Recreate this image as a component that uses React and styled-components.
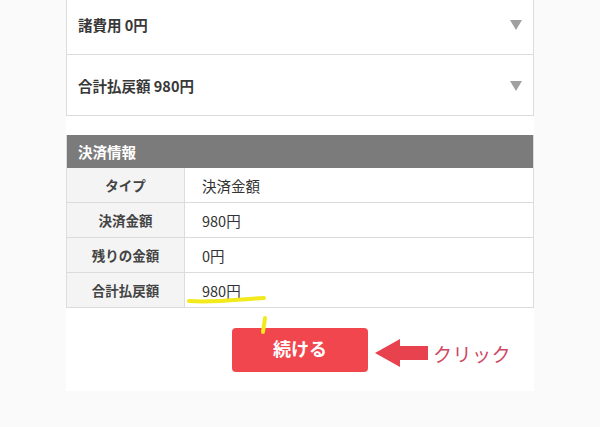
import React from 'react';
import styled, { createGlobalStyle } from 'styled-components';

const GlobalStyle = createGlobalStyle`
  html, body {
    margin: 0;
    padding: 0;
    background: #fafafa;
    font-family: "Noto Sans CJK JP", "Noto Sans", sans-serif;
  }
`;

const Page = styled.div`
  width: 600px;
  height: 427px;
  overflow: hidden;
`;

const Column = styled.div`
  position: relative;
  display: flow-root;
  width: 468px;
  margin-left: 66px;
  background: #fff;
  padding-bottom: 19px;
`;

const AccordionList = styled.div`
  margin-top: -7px;
`;

const AccordionRow = styled.div`
  display: flex;
  align-items: center;
  justify-content: space-between;
  height: 60px;
  padding: 0 11px 0 11px;
  border: 1px solid #dcdcdc;
  border-top: ${(p) => (p.first ? '1px solid #dcdcdc' : 'none')};
  font-size: 14.5px;
  font-weight: bold;
  color: #383838;
`;

const Caret = styled.span`
  width: 0;
  height: 0;
  border-left: 6px solid transparent;
  border-right: 6px solid transparent;
  border-top: 10px solid #a0a0a0;
  margin-top: 1px;
`;

const InfoTable = styled.div`
  margin-top: 19px;
  border: 1px solid #dcdcdc;
  border-top: none;
`;

const TableHead = styled.div`
  height: 33px;
  display: flex;
  align-items: center;
  padding: 0 11px;
  background: #7b7b7b;
  color: #fff;
  font-size: 14.5px;
  font-weight: bold;
`;

const TableRow = styled.div`
  display: grid;
  grid-template-columns: 118px 1fr;
  height: 34px;
  border-top: ${(p) => (p.first ? 'none' : '1px solid #dcdcdc')};
`;

const LabelCell = styled.div`
  display: flex;
  align-items: center;
  justify-content: center;
  background: #f4f4f4;
  border-right: 1px solid #dcdcdc;
  font-size: 13.5px;
  font-weight: bold;
  color: #444;
`;

const ValueCell = styled.div`
  display: flex;
  align-items: center;
  padding-left: 17px;
  font-size: 14.5px;
  color: #333;
`;

const ButtonRow = styled.div`
  position: relative;
  display: flex;
  justify-content: center;
  margin-top: 20px;
`;

const ContinueButton = styled.button`
  width: 136px;
  height: 44px;
  border: none;
  border-radius: 4px;
  background: #f2464f;
  color: #fff;
  font-family: inherit;
  font-size: 18px;
  font-weight: bold;
  padding: 0 0 4px;
`;

const Callout = styled.div`
  position: absolute;
  left: 309px;
  top: 10px;
  display: flex;
  align-items: center;
  gap: 4px;
`;

const CalloutText = styled.span`
  font-size: 19px;
  color: #cf4763;
  letter-spacing: 0.5px;
  line-height: 1;
`;

const Marker = styled.svg`
  position: absolute;
  left: 0;
  top: 0;
  pointer-events: none;
`;

const rows = [
  ['タイプ', '決済金額'],
  ['決済金額', '980円'],
  ['残りの金額', '0円'],
  ['合計払戻額', '980円'],
];

export default function App() {
  return (
    <Page>
      <GlobalStyle />
      <Column>
        <AccordionList>
          <AccordionRow first>
            諸費用 0円
            <Caret />
          </AccordionRow>
          <AccordionRow>
            合計払戻額 980円
            <Caret />
          </AccordionRow>
        </AccordionList>

        <InfoTable>
          <TableHead>決済情報</TableHead>
          {rows.map(([label, value], i) => (
            <TableRow key={label} first={i === 0}>
              <LabelCell>{label}</LabelCell>
              <ValueCell>{value}</ValueCell>
            </TableRow>
          ))}
        </InfoTable>

        <ButtonRow>
          <ContinueButton>続ける</ContinueButton>
          <Callout>
            <svg width="54" height="30" viewBox="0 0 54 30">
              <path d="M0 15 L25 1 L25 8 L53 8 L53 22 L25 22 L25 29 Z" fill="#e8424f" />
            </svg>
            <CalloutText>クリック</CalloutText>
          </Callout>
        </ButtonRow>

        {/* yellow highlighter marks drawn over the screenshot */}
        <Marker width="468" height="340" viewBox="0 0 468 340">
          <path
            d="M123 301 C150 303 175 299 198 298"
            stroke="#f2ea1c"
            strokeWidth="4"
            strokeLinecap="round"
            fill="none"
          />
          <path
            d="M199 318 L197 332"
            stroke="#f2ea1c"
            strokeWidth="4"
            strokeLinecap="round"
            fill="none"
          />
        </Marker>
      </Column>
    </Page>
  );
}
